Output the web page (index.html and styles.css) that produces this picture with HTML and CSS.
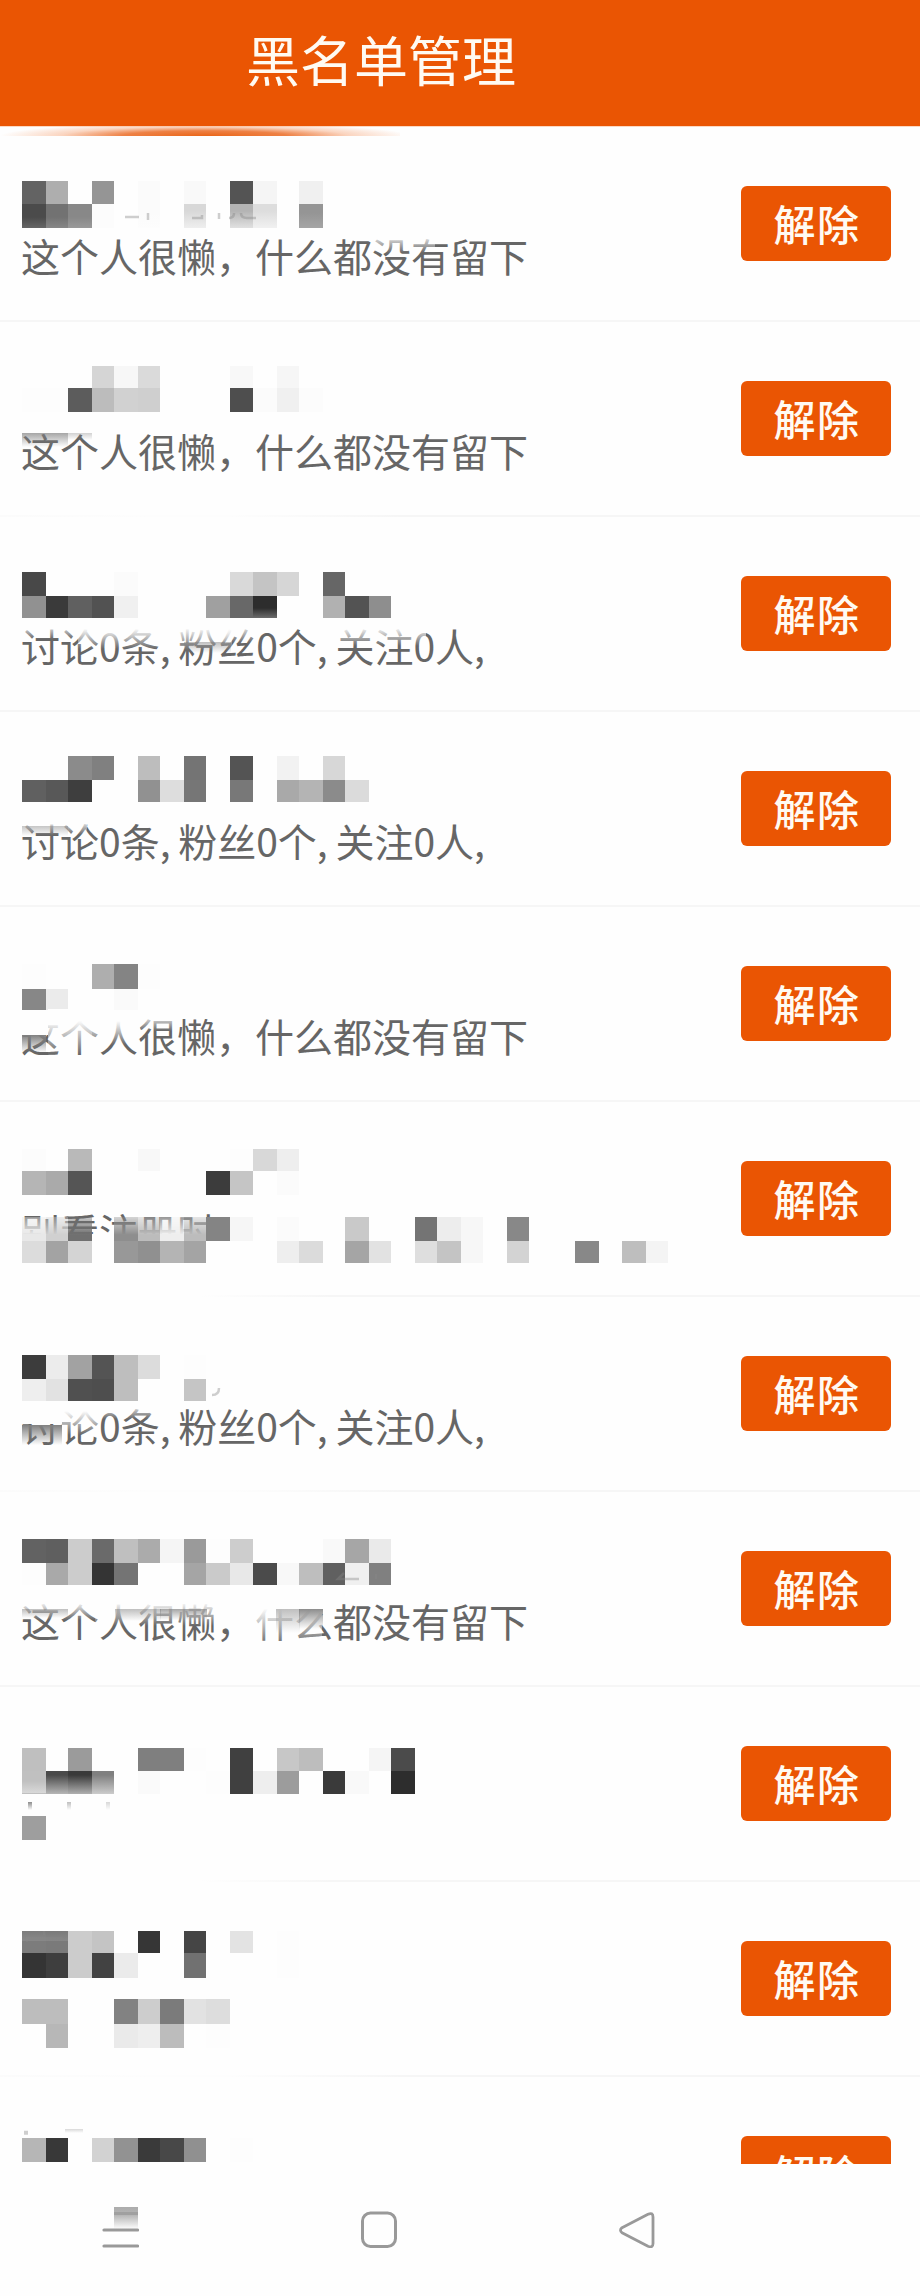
FILE: index.html
```html
<!DOCTYPE html>
<html lang="zh-CN">
<head>
    <meta charset="UTF-8">
    <meta name="viewport" content="width=device-width, initial-scale=1.0">
    <title>黑名单管理</title>
    <link rel="stylesheet" href="styles.css">
</head>
<body>

    <header class="header">
        <h1>黑名单管理</h1>
        <div class="glow"></div>
    </header>

    <ul class="list" id="list"></ul>

    <nav class="nav">
        <svg width="37" height="44" viewBox="0 0 37 44">
            <defs>
                <linearGradient id="navFade" x1="0" y1="0" x2="0" y2="1">
                    <stop offset="0" stop-color="#acacac"/>
                    <stop offset="0.35" stop-color="#b4b4b4"/>
                    <stop offset="1" stop-color="#fefefe"/>
                </linearGradient>
            </defs>
            <rect x="12" y="3" width="24" height="22" fill="url(#navFade)"/>
            <path d="M12 9.5H36" stroke="#a0a0a0" stroke-width="3"/>
            <path d="M2 26H35.500M2 42H35.500" stroke="#999" stroke-width="3.2" stroke-linecap="round"/>
        </svg>
        <svg width="37" height="44" viewBox="0 0 37 44">
            <rect x="2.500" y="9" width="33" height="33.5" rx="8" fill="none" stroke="#999" stroke-width="3"/>
        </svg>
        <svg width="37" height="44" viewBox="0 0 37 44">
            <path d="M4 23.7L30 10.2Q35 8 35 13V39.500Q35 44.200 30 42.200L4 28.700Q1 26.200 4 23.700Z" fill="none" stroke="#999" stroke-width="2.8" stroke-linejoin="round"/>
        </svg>
    </nav>

    <script>
const LAZY = '这个人很懒，什么都没有留下';
const STATS = '讨论0条, 粉丝0个, 关注0人,';

// cells: [y, height, grey of each column]
// smears: [gradient, x, y, width, height, opacity]
const users = [
    {
        text: LAZY,
        cells: [
            [54, 22.5, '63 ae .. 95 .. fb .. f9 .. 54 f5 .. f0'],
            [76.5, 24, '4b 72 88 fc .. fb .. d8 .. b4 dd .. 95']
        ],
        smears: [['up', 138, 84, 139, 17, 0.6], ['up', 22, 90, 70, 11, 0.15], ['up', 299, 86, 24, 15, 0.15], ['down', 375, 108, 60, 18, 0.7]],
        marks: 'M192 91H202V88M219 92V86M229 91Q234 91 234 86M241 86Q241 91 247 91H256M125 90H139M148 93V86'
    },
    {
        text: LAZY,
        line: 'part',
        cells: [
            [43.7, 22, '.. .. .. d5 f7 da .. .. .. f8 .. f6'],
            [65.5, 24, 'fd fd 5c bc d1 cf .. fe .. 4e fb f0 fc']
        ],
        smears: [['grey', 22, 111, 46, 14, 0.7], ['grey', 68, 111, 24, 7, 0.35]]
    },
    {
        text: STATS,
        cells: [
            [54.7, 24.3, '48 .. .. .. fb .. .. .. .. d9 c4 d6 .. 66'],
            [79, 21.7, '91 3a 60 52 f0 .. .. .. a0 68 2d .. .. b1 53 8e']
        ],
        smears: [['down', 20, 106, 58, 16, 0.8], ['down', 78, 106, 84, 26, 0.95], ['down', 180, 103, 52, 30, 1], ['down', 220, 106, 34, 20, 0.8], ['down', 338, 106, 88, 23, 0.9], ['grey', 184, 125, 47, 11, 0.5], ['up', 253, 91, 24, 10, 0.3]]
    },
    {
        text: STATS,
        cells: [
            [43.7, 24.3, '.. .. 8b 80 .. bd .. 74 .. 54 .. f2 .. d7'],
            [68, 22, '60 58 3e fe .. 91 dd 76 .. 78 .. a9 b4 8b db']
        ],
        smears: [['down', 22, 107, 65, 16, 0.8], ['grey', 22, 114, 46, 10, 0.45]]
    },
    {
        text: LAZY,
        cells: [
            [57, 24.7, 'fd .. .. ae 84 fd'],
            [81.7, 21.6, '87 eb .. .. fa']
        ],
        smears: [['solid', 20, 108, 28, 20, 1], ['down', 48, 102, 44, 46, 1], ['down', 92, 106, 48, 32, 1], ['down', 138, 106, 36, 18, 0.8], ['grey', 22, 128, 24, 18, 1]]
    },
    {
        text: '别看注册时',
        line: 'fade',
        cells: [
            [46.5, 22, 'fc .. b9 .. .. f8 .. .. .. fd d8 ee'],
            [68.5, 24.2, 'b5 aa 55 .. .. .. .. .. 3c c5 .. fb'],
            [138.7, 22.3, 'dc a3 d4 .. 98 90 b4 a4 .. .. .. ee db .. a5 e2 .. de c4 f7 fe d3 .. .. 88 .. be f4'],
            [114.5, 24.2, '.. .. .. .. .. .. .. .. 84 f6 .. fb .. .. c9 .. .. 74 ed f7 .. 88']
        ],
        // blocks that let the first line of the text show through
        soft: [114.5, 24.2, 'e8 d0 70 .. 8e bc ee bc'],
        cover: [20, 132, 260, 32]
    },
    {
        text: STATS,
        line: 'part',
        cells: [
            [57.5, 24.2, '3c ec a2 54 be dc .. fd'],
            [81.7, 21.8, 'ee e2 50 4e be .. .. c5']
        ],
        smears: [['solid', 20, 108, 42, 19, 1], ['down', 60, 106, 40, 32, 1], ['down', 98, 108, 60, 14, 0.7], ['grey', 22, 128, 40, 20, 1]],
        marks: 'M212 98Q219 98 219 91'
    },
    {
        text: LAZY,
        cells: [
            [47, 23.7, '62 5f cc 6a bf ab f5 9a fd cd .. .. .. f9 a6 ea'],
            [70.7, 22.3, 'fd a9 cc 34 74 .. .. a5 ca e8 4b f8 be 60 f0 80']
        ],
        smears: [['down', 20, 106, 75, 22, 0.9], ['down', 95, 102, 130, 32, 1], ['down', 250, 104, 72, 50, 1], ['grey', 22, 117, 46, 9, 0.5], ['grey', 115, 117, 46, 12, 0.5], ['grey', 160, 117, 47, 11, 0.7], ['grey', 276, 117, 24, 24, 0.5], ['grey', 299, 117, 24, 20, 0.9]],
        marks: 'M344 81L338 87H359M376 87V82'
    },
    {
        text: '',
        line: 'fade',
        cells: [
            [60.5, 23.8, 'bf .. 9b .. .. 7f 7f fd .. 40 .. c7 bd .. .. f5 4b'],
            [84.3, 22.2, 'c0 4a 3a 80 .. fa .. .. fd 40 ee 9c .. 3a f9 .. 2d'],
            [128.5, 24.2, '9e']
        ],
        smears: [['up', 46, 88, 69, 19, 0.6], ['up', 22, 94, 24, 12, 0.4], ['grey', 28, 115, 4, 8, 0.9], ['grey', 67, 115, 4, 8, 0.5], ['grey', 106, 115, 4, 8, 0.3]]
    },
    {
        text: '',
        line: 'part',
        cells: [
            [49.3, 22, '7c 7a cc c4 .. 36 .. 45 .. e3 .. fd'],
            [71.3, 24.4, '34 3e cc 42 eb .. .. 71 .. .. .. fd'],
            [117.3, 24.2, 'bd bd .. .. 82 cd 7b e2 dd'],
            [141.5, 24.3, '.. b7 .. .. ea ee bc .. fd']
        ],
        smears: [['up', 22, 49, 46, 10, 0.1]],
        marks: 'M27 60V56H62M44 53V49'
    },
    {
        text: '',
        cells: [
            [60.7, 24.3, 'b6 38 .. d2 92 3a 48 90 .. fd']
        ],
        smears: [['grey', 65, 52, 18, 4, 0.3]],
        marks: 'M24 55H28M24 56.500H28'
    }
];

// Columns are 24px and 22px wide in turn
function columnX(c) {
    return Math.round(22 + 23.06 * c + (c % 2 ? 0.9 : 0));
}

function drawCells(row) {
    const y = Math.round(row[0]);
    const h = Math.round(row[0] + row[1]) - y;
    return row[2].split(' ').map((v, c) => {
        if (v === '..') return '';
        return `<rect x="${columnX(c)}" y="${y}" width="${columnX(c + 1) - columnX(c)}" height="${h}" fill="#${v}${v}${v}"/>`;
    }).join('');
}

function drawMosaic(user) {
    let out = '';
    if (user.cover) {
        const [x, y, w, h] = user.cover;
        out += `<rect x="${x}" y="${y}" width="${w}" height="${h}" fill="#fefefe"/>`;
    }
    if (user.soft) out += `<g mask="url(#softMask)">${drawCells(user.soft)}</g>`;
    out += user.cells.map(drawCells).join('');
    out += (user.smears || []).map(([kind, x, y, w, h, o]) =>
        `<rect x="${x}" y="${y}" width="${w}" height="${h}" opacity="${o}" fill="url(#${kind})"/>`
    ).join('');
    if (user.marks) out += `<path class="marks" d="${user.marks}"/>`;
    return out;
}

const defs = `<defs>
    <linearGradient id="solid"><stop stop-color="#fefefe"/></linearGradient>
    <linearGradient id="down" x1="0" y1="0" x2="0" y2="1"><stop offset="0.25" stop-color="#fefefe"/><stop offset="1" stop-color="#fefefe" stop-opacity="0"/></linearGradient>
    <linearGradient id="up" x1="0" y1="1" x2="0" y2="0"><stop offset="0" stop-color="#fefefe"/><stop offset="1" stop-color="#fefefe" stop-opacity="0"/></linearGradient>
    <linearGradient id="grey" x1="0" y1="0" x2="0" y2="1"><stop offset="0" stop-color="#808080"/><stop offset="1" stop-color="#808080" stop-opacity="0"/></linearGradient>
    <linearGradient id="softStops" x1="0" y1="0" x2="0" y2="1"><stop offset="0" stop-color="#555"/><stop offset="0.75" stop-color="#fff"/></linearGradient>
    <mask id="softMask" maskUnits="userSpaceOnUse" x="0" y="114" width="300" height="25"><rect x="0" y="114" width="300" height="25" fill="url(#softStops)"/></mask>
</defs>`;

document.getElementById('list').innerHTML = users.map((user, i) => `
    <li class="item ${user.line || ''}">
        <p class="desc">${user.text}</p>
        <button class="remove">解除</button>
        <svg class="mosaic" width="700" height="170">${i === 0 ? defs : ''}${drawMosaic(user)}</svg>
    </li>`).join('');
    </script>

</body>
</html>
```

FILE: styles.css
```css
* {
    box-sizing: border-box;
}
body {
    margin: 0;
    height: 2296px;
    background: #fefefe;
    font-family: "Noto Sans CJK SC", sans-serif;
    display: flex;
    flex-direction: column;
    overflow: hidden;
}
.header {
    position: relative;
    height: 127px;
    flex-shrink: 0;
    padding-left: 246px;
    background: #ea5503;
    border-bottom: 1px solid #fbd9c4;
}
.header h1 {
    margin: 0;
    color: #fffaf2;
    font-size: 54px;
    font-weight: 400;
    line-height: 118px;
}
.glow {
    position: absolute;
    left: 0;
    top: 126px;
    width: 400px;
    height: 10px;
    background: radial-gradient(ellipse 205px 13px at 205px 100%, #ea6518 0%, #ee8145 40%, rgba(248, 185, 150, 0.6) 70%, rgba(254, 254, 254, 0) 100%);
}
.list {
    list-style: none;
    margin: 0;
    padding: 0;
    height: 2037px;
    flex-shrink: 0;
    overflow: hidden;
}
.item {
    position: relative;
    height: 195px;
    padding: 0 29px 2px 21px;
    display: flex;
    align-items: center;
    justify-content: space-between;
    background: linear-gradient(#f6f6f6, #f6f6f6) left bottom / 100% 2px no-repeat;
}
.item.fade {
    background-image: linear-gradient(to right, #fefefe 200px, #f6f6f6 330px);
}
.item.part {
    background-image: linear-gradient(to right, #fbfbfb 0, #fdfdfd 150px, #fdfdfd 230px, #f6f6f6 400px);
}
.desc {
    margin: 62px 0 0;
    color: #666;
    font-size: 39px;
    line-height: 58px;
    word-spacing: -1px;
    white-space: nowrap;
}
.remove {
    width: 150px;
    height: 75px;
    padding: 0 0 2px 2px;
    border: none;
    border-radius: 6px;
    background: #ea5503;
    color: #fffaf2;
    font-family: inherit;
    font-size: 42px;
    font-weight: 500;
    letter-spacing: 1.5px;
    line-height: 73px;
}
.mosaic {
    position: absolute;
    left: 0;
    top: 0;
    pointer-events: none;
}
.marks {
    fill: none;
    stroke: #888;
    stroke-width: 2.5;
    opacity: 0.4;
}
.nav {
    height: 132px;
    padding: 40px 0 0 102px;
    display: flex;
    gap: 221px;
}
```
